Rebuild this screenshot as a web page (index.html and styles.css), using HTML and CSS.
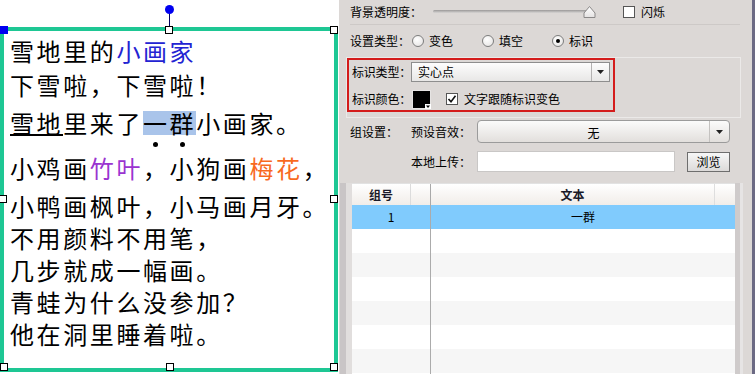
FILE: index.html
```html
<!DOCTYPE html>
<html>
<head>
<meta charset="utf-8">
<link rel="stylesheet" href="styles.css">
</head>
<body>
<div class="app">
  <div class="canvas">
    <div class="frame">
      <div class="ln">雪地里的<span class="blue">小画家</span></div>
      <div class="ln l2">下雪啦，下雪啦！</div>
      <div class="ln l3"><span class="ul">雪地</span>里来了<span class="hl">一群</span>小画家。</div>
      <div class="dots"><i class="d1"></i><i class="d2"></i></div>
      <div class="ln">小鸡画<span class="purple">竹叶</span>，小狗画<span class="orange">梅花</span>，</div>
      <div class="ln l5">小鸭画枫叶，小马画月牙。</div>
      <div class="ln">不用颜料不用笔，</div>
      <div class="ln">几步就成一幅画。</div>
      <div class="ln">青蛙为什么没参加？</div>
      <div class="ln">他在洞里睡着啦。</div>

      <span class="rot-line"></span>
      <span class="rot-dot"></span>
      <span class="h h-tl"></span>
      <span class="h h-tm"></span>
      <span class="h h-tr"></span>
      <span class="h h-ml"></span>
      <span class="h h-mr"></span>
      <span class="h h-bl"></span>
      <span class="h h-bm"></span>
      <span class="h h-br"></span>
    </div>
  </div>

  <div class="panel">
    <div class="r1">
      <span class="lbl1">背景透明度：</span>
      <svg class="slider" width="165" height="14" viewBox="0 0 165 14">
        <defs>
          <linearGradient id="tg" x1="0" y1="0" x2="0" y2="1">
            <stop offset="0" stop-color="#9a9898"/>
            <stop offset="1" stop-color="#d8d6d5"/>
          </linearGradient>
          <linearGradient id="thg" x1="0" y1="0" x2="0" y2="1">
            <stop offset="0" stop-color="#ffffff"/>
            <stop offset="1" stop-color="#e4e2e2"/>
          </linearGradient>
        </defs>
        <rect x="0" y="5" width="158" height="3" rx="1.5" fill="url(#tg)"/>
        <path d="M156.5 1.5 L162 8 L162 12.5 L151 12.5 L151 8 Z" fill="url(#thg)" stroke="#8a8888" stroke-width="1" stroke-linejoin="round"/>
      </svg>
      <span class="cb cb1"></span>
      <span class="cbt">闪烁</span>
    </div>

    <div class="r2">
      <span class="lbl2">设置类型：</span>
      <span class="radio"></span><span class="rt">变色</span>
      <span class="radio rg"></span><span class="rt">填空</span>
      <span class="radio rg"><i></i></span><span class="rt">标识</span>
    </div>

    <div class="group">
      <div class="redbox">
        <div class="ra">
          <span class="lbl3">标识类型：</span>
          <div class="dd1">
            <span class="dd1-text">实心点</span>
            <span class="dd1-arrow"><svg width="7" height="4" viewBox="0 0 7 4"><path d="M0 0 H7 L3.5 4 Z" fill="#222"/></svg></span>
          </div>
        </div>
        <div class="rb">
          <span class="lbl3">标识颜色：</span>
          <svg class="swatch" width="19" height="19" viewBox="0 0 19 19">
            <rect x="0.5" y="0.5" width="18" height="18" fill="#000" stroke="#e6e4e3"/>
            <rect x="13" y="14" width="6" height="5" fill="#fff"/>
            <path d="M14 15.5 H18 L16 18 Z" fill="#000"/>
          </svg>
          <span class="cb cb2">
            <svg width="10" height="10" viewBox="0 0 10 10"><path d="M1.5 5 L4 7.8 L8.5 1.8" fill="none" stroke="#111" stroke-width="1.6"/></svg>
          </span>
          <span class="cbt2">文字跟随标识变色</span>
        </div>
      </div>
    </div>

    <div class="r3">
      <span class="lbl4">组设置：</span>
      <span class="lbl5">预设音效：</span>
      <div class="dd2">
        <span class="dd2-text">无</span>
        <span class="dd2-arrow"><svg width="7" height="4" viewBox="0 0 7 4"><path d="M0 0 H7 L3.5 4 Z" fill="#222"/></svg></span>
      </div>
    </div>

    <div class="r4">
      <span class="lbl5">本地上传：</span>
      <span class="input"></span>
      <span class="btn">浏览</span>
    </div>

    <div class="tablewrap">
      <span class="s1"></span><span class="s2"></span><span class="s3"></span>
      <div class="table">
        <div class="thead">
          <div class="th c1">组号</div>
          <div class="th c1b"></div>
          <div class="th c2">文本</div>
          <div class="th c3"></div>
        </div>
        <div class="tr sel"><div class="td t1">1</div><div class="td t2">一群</div></div>
        <div class="tr"><div class="td t1"></div><div class="td t2"></div></div>
        <div class="tr alt"><div class="td t1"></div><div class="td t2"></div></div>
        <div class="tr"><div class="td t1"></div><div class="td t2"></div></div>
        <div class="tr alt"><div class="td t1"></div><div class="td t2"></div></div>
        <div class="tr"><div class="td t1"></div><div class="td t2"></div></div>
        <div class="tr alt"><div class="td t1"></div><div class="td t2"></div></div>
        <div class="tr"><div class="td t1"></div><div class="td t2"></div></div>
      </div>
      <span class="s4"></span><span class="s5"></span>
    </div>
  </div>
</div>
</body>
</html>
```

FILE: styles.css
```css
* { box-sizing: border-box; }
html, body { margin: 0; padding: 0; }
body {
  width: 755px;
  height: 374px;
  overflow: hidden;
  background: #fff;
  font-family: "Noto Sans CJK SC", "Noto Sans", sans-serif;
}
.app { display: flex; height: 374px; }

/* ---------- left canvas ---------- */
.canvas { width: 339px; flex: none; background: #fff; }
.frame {
  position: relative;
  margin-top: 27px;
  width: 338px;
  height: 345px;
  border: 4px solid #1ec794;
  padding: 4px 0 0 6px;
  font-size: 24px;
  line-height: 32px;
  letter-spacing: 2.6px;
  color: #000;
}
.ln { height: 32px; white-space: nowrap; }
.l2 { margin-top: 2px; }
.l3 { margin-top: 6px; }
.l5 { margin-top: 6px; }
.blue { color: #2323d2; }
.purple { color: #9a34d0; }
.orange { color: #f86a1e; }
.ul {
  background: linear-gradient(to bottom, transparent 29px, #000 29px, #000 31px, transparent 31px);
}
.hl {
  background: linear-gradient(to bottom, transparent 6px, #a9c4ea 6px, #a9c4ea 30px, transparent 30px);
}
.dots { height: 13px; position: relative; }
.dots i {
  position: absolute;
  top: 3px;
  width: 5px;
  height: 5px;
  border-radius: 50%;
  background: #000;
}
.dots .d1 { left: 143px; }
.dots .d2 { left: 170px; }

.h {
  position: absolute;
  width: 8px;
  height: 8px;
  background: #fff;
  border: 1px solid #000;
}
.h-tl { left: -4px; top: -5px; background: #0000f0; border-color: #0000f0; }
.h-tm { left: 161px; top: -5px; }
.h-tr { left: 326px; top: -5px; }
.h-ml { left: -5px; top: 164px; }
.h-mr { left: 326px; top: 164px; }
.h-bl { left: -4px; top: 332px; }
.h-bm { left: 162px; top: 332px; }
.h-br { left: 326px; top: 332px; }
.rot-dot {
  position: absolute;
  left: 161px;
  top: -26px;
  width: 9px;
  height: 9px;
  border-radius: 50%;
  background: #0000f0;
}
.rot-line {
  position: absolute;
  left: 165px;
  top: -18px;
  width: 1px;
  height: 13px;
  background: #000060;
}

/* ---------- right panel ---------- */
.panel {
  flex: 1;
  background: #dcd8d6;
  border-right: 3px solid #6c6a84;
  font-size: 12px;
  line-height: 16px;
  color: #000;
  overflow: hidden;
  white-space: nowrap;
}
.r1 {
  display: flex;
  align-items: center;
  height: 25px;
  margin: 0 12px 0 11px;
  border-bottom: 1px solid #cdc9c7;
}
.lbl1 { width: 83px; flex: none; }
.slider { flex: none; display: block; }
.cb {
  flex: none;
  width: 12px;
  height: 12px;
  border: 1px solid #555;
  background: #fff;
  display: grid;
  place-items: center;
}
.cb1 { margin-left: 25px; }
.cbt { margin-left: 6px; }

.r2 {
  display: flex;
  align-items: center;
  height: 31px;
  padding-left: 11px;
}
.lbl2 { width: 62px; flex: none; }
.radio {
  flex: none;
  width: 12px;
  height: 12px;
  border-radius: 50%;
  border: 1px solid #7d7d7d;
  background: radial-gradient(circle at 40% 35%, #ffffff, #e2e0df);
  display: grid;
  place-items: center;
}
.radio i { width: 4px; height: 4px; border-radius: 50%; background: #000; }
.rg { margin-left: 29px; }
.rt { margin-left: 5px; }

.group {
  margin: 1px 0 0 7px;
  width: 395px;
  height: 61px;
  border: 1px solid #ebe9e8;
}
.redbox {
  width: 268px;
  height: 54px;
  border: 2px solid #d41c1c;
  padding: 2px 0 0 3px;
}
.ra, .rb { display: flex; align-items: center; height: 20px; }
.rb { margin-top: 7px; }
.lbl3 { width: 59px; flex: none; white-space: nowrap; letter-spacing: -0.2px; }
.dd1 {
  display: flex;
  flex: none;
  width: 199px;
  height: 20px;
  border: 1px solid #8e8e8e;
  background: linear-gradient(#fdfdfd, #e8e7e6);
}
.dd1-text { flex: 1; padding-left: 6px; line-height: 18px; }
.dd1-arrow {
  width: 18px;
  border-left: 1px solid #b4b2b2;
  display: grid;
  place-items: center;
}
.swatch { display: block; margin-left: 1px; flex: none; }
.cb2 { margin-left: 15px; }
.cbt2 { margin-left: 6px; }

.r3 {
  display: flex;
  align-items: center;
  height: 23px;
  margin-top: 2px;
  padding-left: 11px;
}
.lbl4 { width: 61px; flex: none; }
.lbl5 { width: 66px; flex: none; }
.dd2 {
  display: flex;
  flex: none;
  width: 253px;
  height: 23px;
  border: 1px solid #9b9b9b;
  border-radius: 4px;
  background: linear-gradient(#fbfbfb, #e2dfdc);
}
.dd2-text { flex: 1; text-align: center; line-height: 23px; }
.dd2-arrow {
  width: 20px;
  border-left: 1px solid #c4c2c0;
  display: grid;
  place-items: center;
}

.r4 {
  display: flex;
  align-items: center;
  height: 23px;
  margin-top: 7px;
  padding-left: 72px;
}
.input {
  flex: none;
  width: 198px;
  height: 21px;
  background: #fff;
  border: 1px solid #c9c7c6;
}
.btn {
  flex: none;
  margin-left: 12px;
  width: 43px;
  height: 20px;
  border: 1px solid #6e6e6e;
  background: linear-gradient(#f7f7f7, #dcdad9);
  text-align: center;
  line-height: 18px;
}

.tablewrap {
  display: flex;
  margin-top: 10px;
  height: 191px;
}
.s1 { width: 1px; flex: none; }
.s2 { width: 6px; flex: none; background: #c9c5c6; }
.s3 { width: 6px; flex: none; background: #e1dedd; }
.s4 { width: 5px; flex: none; background: #cfcbcb; }
.s5 { width: 3px; flex: none; background: #e6e4e4; }
.table {
  width: 383px;
  flex: none;
  background: #fff;
  border-top: 1px solid #e2e2e2;
}
.thead {
  display: grid;
  grid-template-columns: 59px 20px 284px 20px;
  height: 21px;
  background: linear-gradient(#ffffff, #f1ede9);
}
.th {
  font-weight: 700;
  color: #1a1a28;
  text-align: center;
  line-height: 21px;
}
.c1 { border-right: 1px solid #dcdcdc; }
.c1b { border-right: 1px solid #a9a9a9; }
.c2 { border-right: 1px solid #dedede; }
.tr {
  display: grid;
  grid-template-columns: 79px 304px;
  height: 24px;
  background: #fff;
}
.tr.alt { background: #f6f6f6; }
.tr.sel { background: #80cbfd; }
.td { text-align: center; line-height: 24px; }
.t1 { border-right: 1px solid #ababab; }
```
